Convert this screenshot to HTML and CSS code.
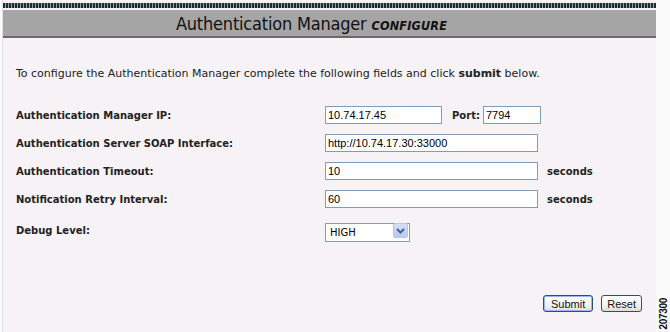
FILE: index.html
```html
<!DOCTYPE html>
<html lang="en">
<head>
    <meta charset="UTF-8">
    <title>Authentication Manager Configure</title>
    <link rel="stylesheet" href="styles.css">
</head>
<body>
    <div class="page">
        <div class="panel">
            <div class="stripe"></div>
            <div class="titlebar">
                <h1>Authentication Manager <em>CONFIGURE</em></h1>
            </div>

            <p class="intro">To configure the Authentication Manager complete the following fields and click <strong>submit</strong> below.</p>

            <form class="form">
                <label class="row-label">Authentication Manager IP:</label>
                <div class="row-field">
                    <input type="text" class="input input-ip" value="10.74.17.45">
                    <span class="unit unit-port">Port:</span>
                    <input type="text" class="input input-port" value="7794">
                </div>

                <label class="row-label">Authentication Server SOAP Interface:</label>
                <div class="row-field">
                    <input type="text" class="input input-wide" value="http://10.74.17.30:33000">
                </div>

                <label class="row-label">Authentication Timeout:</label>
                <div class="row-field">
                    <input type="text" class="input input-wide" value="10">
                    <span class="unit">seconds</span>
                </div>

                <label class="row-label">Notification Retry Interval:</label>
                <div class="row-field">
                    <input type="text" class="input input-wide" value="60">
                    <span class="unit">seconds</span>
                </div>

                <label class="row-label row-last">Debug Level:</label>
                <div class="row-field row-last">
                    <div class="select-wrap">
                        <select class="select">
                            <option>HIGH</option>
                            <option>MEDIUM</option>
                            <option>LOW</option>
                        </select>
                        <span class="select-btn">
                            <svg width="9" height="6" viewBox="0 0 9 6"><path d="M1 1 L4.5 4.5 L8 1" fill="none" stroke="#4d6185" stroke-width="2"/></svg>
                        </span>
                    </div>
                </div>
            </form>

            <div class="actions">
                <button class="btn btn-submit">Submit</button>
                <button class="btn btn-reset">Reset</button>
            </div>
        </div>
        <div class="side">
            <span class="fig-num">207300</span>
        </div>
    </div>
</body>
</html>
```

FILE: styles.css
```css
body {
    margin: 0;
    padding: 0;
    background-color: #fbfafb;
    font-family: 'DejaVu Sans', Verdana, sans-serif;
    color: #000;
}

.page {
    display: flex;
    width: 670px;
    height: 332px;
}

.panel {
    width: 653px;
    margin-left: 2px;
    background-color: #f6f2f6;
    border-left: 1px solid #e2dfe2;
    display: flex;
    flex-direction: column;
}

.stripe {
    height: 5px;
    margin-top: 3px;
    background: repeating-linear-gradient(90deg, #1e2a2e 0, #1e2a2e 2px, #8fa6aa 2px, #8fa6aa 3px);
}

.titlebar {
    margin-top: 2px;
    height: 26px;
    background-color: #a5a5a5;
    border-bottom: 2px solid #6b686b;
    display: flex;
    align-items: center;
    justify-content: center;
}

h1 {
    margin: 0 0 0 -36px;
    font-family: 'DejaVu Sans Condensed', 'DejaVu Sans', sans-serif;
    font-weight: normal;
    font-size: 18px;
    color: #111;
    letter-spacing: -0.2px;
}

h1 em {
    font-size: 12.5px;
    font-weight: bold;
    font-style: italic;
    letter-spacing: 0.2px;
}

.intro {
    margin: 29px 0 0 13px;
    font-size: 11px;
    color: #222;
}

.form {
    margin: 26px 0 0 13px;
    display: grid;
    grid-template-columns: 309px 1fr;
    row-gap: 10px;
    align-items: center;
}

.row-label {
    font-size: 10px;
    font-weight: bold;
    color: #222;
}

.row-field {
    display: flex;
    align-items: center;
}

.row-last {
    margin-top: 3px;
}

.input {
    box-sizing: border-box;
    height: 18px;
    padding: 0 2px;
    border: 1px solid #7f9db9;
    background: #fff;
    font-family: 'Liberation Sans', Arial, sans-serif;
    font-size: 11px;
    color: #000;
    outline: none;
}

.input-ip {
    width: 117px;
}

.input-port {
    width: 58px;
}

.input-wide {
    width: 213px;
}

.unit {
    margin-left: 9px;
    font-size: 10px;
    font-weight: bold;
    color: #222;
}

.unit-port {
    margin-left: 10px;
    margin-right: 3px;
}

.select-wrap {
    position: relative;
    width: 85px;
    height: 19px;
}

.select {
    appearance: none;
    box-sizing: border-box;
    width: 85px;
    height: 19px;
    padding: 0 0 0 4px;
    border: 1px solid #7f9db9;
    background: #fff;
    font-family: 'DejaVu Sans', sans-serif;
    font-size: 10px;
    color: #000;
    outline: none;
}

.select-btn {
    position: absolute;
    top: 2px;
    right: 2px;
    width: 15px;
    height: 15px;
    box-sizing: border-box;
    border-radius: 2px;
    background: linear-gradient(#d5e0fb, #b5c8f5);
    border: 1px solid #b6c6ee;
    display: flex;
    align-items: center;
    justify-content: center;
}

.actions {
    margin-top: auto;
    margin-bottom: 20px;
    display: flex;
    justify-content: flex-end;
    gap: 8px;
    padding-right: 14px;
}

.btn {
    height: 17px;
    padding: 0 5px;
    border: 1px solid #2f4c73;
    border-radius: 3px;
    background: linear-gradient(#ffffff, #f1f0ea 70%, #dedcd2);
    font-family: 'Liberation Sans', Arial, sans-serif;
    font-size: 11px;
    color: #111;
    cursor: pointer;
}

.btn-submit {
    padding: 0 7px;
    box-shadow: inset 0 0 0 1px #9cb8e8;
}

.side {
    flex: 1;
    display: flex;
    align-items: flex-end;
    justify-content: center;
    padding-bottom: 2px;
}

.fig-num {
    writing-mode: vertical-rl;
    transform: rotate(180deg);
    font-family: 'Liberation Sans', Arial, sans-serif;
    font-size: 10px;
    font-weight: bold;
    color: #111;
    letter-spacing: -0.3px;
}
```
